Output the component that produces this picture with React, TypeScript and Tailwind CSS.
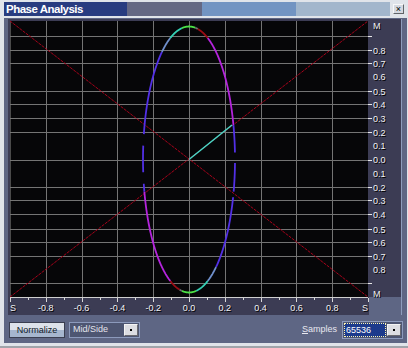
import React from 'react';

// plot geometry, in page pixels
const L = 10, R = 368, T = 21, B = 297;
const CX = 189, CY = 159.5, RX = 46, RY = 133;

const xOf = (v: number) => L + ((v + 1) / 2) * (R - L);

const yLabels: [string, number, boolean][] = [
  ['M', 25, false], ['', 36, true], ['0.8', 50, true], ['0.7', 63, true], ['0.6', 76, false],
  ['0.5', 91, true], ['0.4', 104, true], ['0.3', 118, true], ['0.2', 132, true], ['0.1', 145, false],
  ['0.0', 159.5, true], ['0.1', 173, false], ['0.2', 187, true], ['0.3', 200, true], ['0.4', 214, true],
  ['0.5', 229, true], ['0.6', 242, true], ['0.7', 256, true], ['0.8', 269, false], ['', 283, true],
  ['M', 293, false],
];

const xLabels = ['S', '-0.8', '-0.6', '-0.4', '-0.2', '0.0', '0.2', '0.4', '0.6', '0.8', 'S'];

// colour bands round the ellipse, degrees from the top, clockwise
const bands: [number, number, string][] = [
  [-9, 8, '#4ce046'], [8, 11, '#707070'], [11, 24, '#9a0c14'], [24, 75, '#b424dc'],
  [75, 144, '#5230e6'], [144, 156, '#7090cc'], [156, 171, '#34d0b4'], [171, 189, '#4ce046'],
  [189, 192, '#707070'], [192, 204, '#9a0c14'], [204, 256, '#b424dc'], [256, 324, '#5230e6'],
  [324, 336, '#7090cc'], [336, 351, '#34d0b4'],
];

// the trace drops out in a few places on the flat sides
const gaps: [number, number][] = [[87, 91.5], [104, 106.5], [259.8, 264.2], [276.3, 280.6]];
const inGap = (a: number) => gaps.some(([g0, g1]) => a > g0 && a < g1);

const arc = (a0: number, a1: number) => {
  let d = '';
  let pen = false;
  for (let a = a0; a <= a1 + 0.001; a += 0.5) {
    if (inGap(a)) { pen = false; continue; }
    const r = (a * Math.PI) / 180;
    const p = `${(CX + RX * Math.sin(r)).toFixed(2)},${(CY - RY * Math.cos(r)).toFixed(2)}`;
    d += (pen ? ' L' : ' M') + p;
    pen = true;
  }
  return d;
};

const Label: React.FC<{ x: number; y: number; text: string; anchor?: 'start' | 'middle' }> = ({ x, y, text, anchor = 'start' }) => (
  <>
    <text x={x + 1} y={y + 1} textAnchor={anchor} fill="#000" fontSize={9} fontFamily="'Liberation Sans', Arial, sans-serif">{text}</text>
    <text x={x} y={y} textAnchor={anchor} fill="#f2f2f6" fontSize={9} fontFamily="'Liberation Sans', Arial, sans-serif">{text}</text>
  </>
);

const PhasePlot = () => {
  const gridX = [-0.8, -0.6, -0.4, -0.2, 0, 0.2, 0.4, 0.6, 0.8].map(xOf);
  const gridY = yLabels.filter((l) => l[2]).map((l) => l[1]);
  return (
    <svg width={394} height={296} viewBox="8 19 394 296" className="block">
      <rect x={8} y={19} width={394} height={296} fill="#3c3c54" />
      <rect x={369} y={297} width={32} height={18} fill="#5e6684" />
      <rect x={401} y={19} width={1} height={296} fill="#8e9cbc" />
      <rect x={L} y={T} width={R - L} height={B - T} fill="#060608" />
      <line x1={L + 0.5} y1={T} x2={L + 0.5} y2={B} stroke="#4a4a4a" />
      {gridX.map((x) => (
        <line key={x} x1={Math.round(x) + 0.5} y1={T} x2={Math.round(x) + 0.5} y2={B} stroke="#747474" />
      ))}
      {gridY.map((y) => (
        <line key={y} x1={L} y1={Math.round(y) + 0.5} x2={R} y2={Math.round(y) + 0.5} stroke="#747474" />
      ))}
      {/* diagonals */}
      <line x1={L} y1={T} x2={R} y2={B} stroke="#a8021a" strokeWidth={1} strokeDasharray="3 1" />
      <line x1={L} y1={B} x2={R} y2={T} stroke="#a8021a" strokeWidth={1} strokeDasharray="3 1" />
      {/* ellipse */}
      {bands.map(([a0, a1, c], i) => (
        <path key={i} d={arc(a0, a1)} fill="none" stroke={c} strokeWidth={1.8} />
      ))}
      <line x1={CX} y1={CY} x2={232} y2={125} stroke="#48d8c8" strokeWidth={1.5} />
      {/* bottom axis */}
      <line x1={L} y1={297.5} x2={R} y2={297.5} stroke="#d0d0d0" />
      {Array.from({ length: 21 }, (_, i) => {
        const x = Math.round(xOf(-1 + i * 0.1)) + 0.5;
        return <line key={i} x1={x} y1={298} x2={x} y2={i % 2 === 0 ? 302 : 300} stroke="#d8d8d8" />;
      })}
      {xLabels.map((t, i) => {
        const x = xOf(-1 + i * 0.2);
        const px = i === 0 ? 13 : i === 10 ? 365 : x;
        return <Label key={i} x={px} y={311} text={t} anchor="middle" />;
      })}
      {/* right axis */}
      {yLabels.map(([t, y, tick], i) => (
        <g key={i}>
          {tick && <line x1={368} y1={Math.round(y) + 0.5} x2={372} y2={Math.round(y) + 0.5} stroke="#e8e8e8" />}
          {t && <Label x={373} y={y + 3.5} text={t} />}
        </g>
      ))}
    </svg>
  );
};

const DropArrow = () => (
  <div className="w-[14px] h-[12px] bg-[#dcdde2] border border-t-[#f4f4f4] border-l-[#f4f4f4] border-b-[#6a6a70] border-r-[#6a6a70] flex items-center justify-center">
    <div className="w-[2px] h-[2px] bg-black" />
  </div>
);

export default function App() {
  return (
    <div className="w-[408px] h-[348px] bg-[#e0e4ea] flex flex-col pt-[2px] pl-[4px] pr-[1px] font-['Liberation_Sans',Arial,sans-serif]">
      <div className="h-[14px] flex shrink-0">
        <div className="w-[123px] bg-[#283c80] text-white font-bold text-[11.5px] leading-[14px] pl-[2px] tracking-[-0.5px]">
          Phase Analysis
        </div>
        <div className="w-[75px] bg-[#646884]" />
        <div className="w-[94px] bg-[#7294c2]" />
        <div className="w-[94px] bg-[#a2b6cc]" />
        <div className="ml-[3px] mt-[2px] w-[11px] h-[10px] bg-[#d4d8e0] border border-t-[#f8f8f8] border-l-[#f8f8f8] border-b-[#606468] border-r-[#606468] flex items-center justify-center text-[9px] leading-none text-black">
          ×
        </div>
      </div>
      <div className="h-[2px] shrink-0" />
      <div className="h-[325px] w-[403px] bg-[#5e6684] flex flex-col pt-[1px] pl-[4px] shrink-0">
        <PhasePlot />
        <div className="mt-[6px] h-[18px] flex items-center pr-[4px] text-[9px]">
          <button className="ml-[1px] w-[56px] h-[16px] bg-[linear-gradient(#dde2ea_50%,#a6b6ce_50%)] border border-[#3a3e50] text-[#101828] leading-none">
            Normalize
          </button>
          <div className="ml-[4px] w-[71px] h-[16px] bg-[#4e5672] border border-[#8c9abc] flex items-center justify-between pl-[3px] pr-[1px]">
            <span className="text-[#e4e4ec]">Mid/Side</span>
            <DropArrow />
          </div>
          <div className="flex-1" />
          <span className="text-[#e8e8f0]">
            <span className="underline">S</span>amples
          </span>
          <div className="ml-[5px] w-[61px] h-[18px] border border-[#8c9abc] bg-[#4e5672] flex items-center p-[1px] gap-[1px]">
            <div className="flex-1 h-[14px] bg-[#1c3a8c] border border-dotted border-[#fff6b0] text-white leading-[12px] pl-[1px]">
              65536
            </div>
            <DropArrow />
          </div>
        </div>
      </div>
      <div className="h-[3px] shrink-0" />
      <div className="h-[2px] bg-[#a0a4aa] -ml-[4px] -mr-[1px] shrink-0" />
    </div>
  );
}
